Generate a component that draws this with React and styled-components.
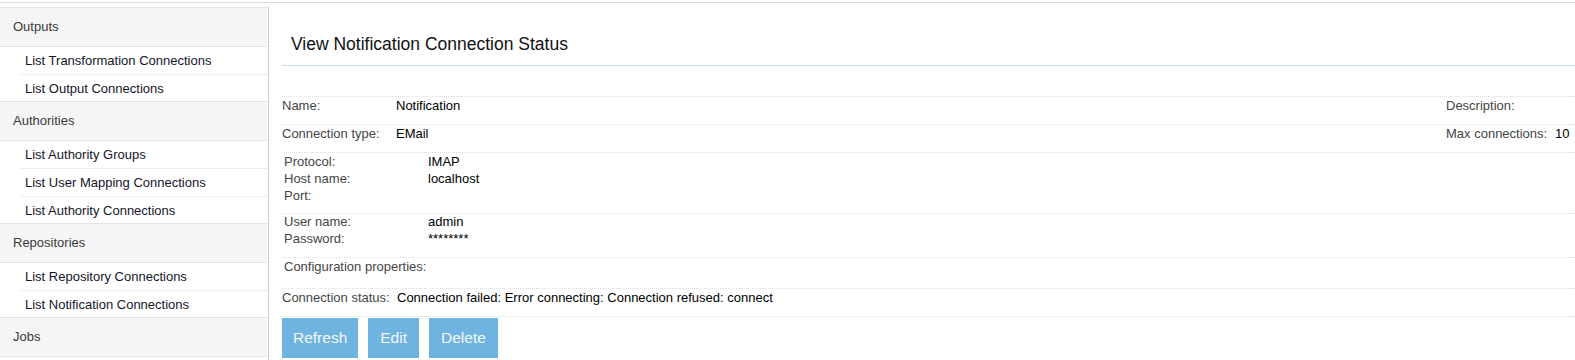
import React from 'react';
import styled, { createGlobalStyle } from 'styled-components';

const GlobalStyle = createGlobalStyle`
    html, body {
        overflow: hidden;
    }
    body {
        margin: 0;
        background: #ffffff;
        font-family: "Liberation Sans", Arial, sans-serif;
        color: #222222;
    }
`;

const TopRule = styled.div`
    margin-top: 2px;
    border-top: 1px solid #d9d9d9;
`;

const Layout = styled.div`
    display: flex;
    align-items: stretch;
    height: 357px;
`;

const SideColumn = styled.aside`
    flex: 0 0 auto;
    margin-top: 3px;
    padding-top: 1px;
    padding-right: 1px;
    border-right: 1px solid #c9c9c9;
`;

const SidePanel = styled.nav`
    width: 267px;
`;

const SectionHeader = styled.div`
    height: 38px;
    line-height: 38px;
    padding-left: 13px;
    background: #f5f5f5;
    border-top: 1px solid #e3e3e3;
    border-bottom: 1px solid #e3e3e3;
    font-size: 13px;
    color: #3a3a3a;
`;

const SectionItem = styled.div`
    height: 27px;
    line-height: 27px;
    margin-left: 20px;
    padding-left: 5px;
    border-bottom: 1px dotted #dcdcdc;
    font-size: 13px;
    color: #15152a;

    &:last-child {
        height: 26px;
        border-bottom: none;
    }
`;

const Main = styled.main`
    flex: 1;
    min-width: 0;
    padding: 0 0 0 13px;
`;

const TitleBar = styled.div`
    padding: 31px 0 11px 9px;
    border-bottom: 1px solid #bfe0f6;
    margin-bottom: 30px;
`;

const Title = styled.h1`
    margin: 0;
    font-size: 17.5px;
    line-height: 20px;
    font-weight: normal;
    color: #111111;
`;

const Row = styled.div`
    display: grid;
    grid-template-columns: ${(props) => props.columns || '1fr'};
    padding: 0 0 ${(props) => props.bottom || 10}px;
    border-top: 1px dotted #dedede;
    font-size: 13px;
    line-height: 17px;
`;

const Label = styled.div`
    color: #444444;
    white-space: nowrap;
    padding-left: ${(props) => props.indent || 0}px;
`;

const Value = styled.div`
    color: #000000;
    white-space: nowrap;
`;

const SubGrid = styled.div`
    display: grid;
    grid-template-columns: 146px 1fr;
    line-height: ${(props) => props.lh || 17}px;
`;

const ButtonBar = styled.div`
    display: flex;
    gap: 10px;
    padding-top: 1px;
    border-top: 1px dotted #dedede;
`;

const ActionButton = styled.button`
    height: 40px;
    padding: 0 ${(props) => props.px || 12}px;
    border: none;
    background: #6fb3e0;
    color: #f4faff;
    font-family: "Liberation Sans", Arial, sans-serif;
    font-size: 15.5px;
    cursor: pointer;
`;

const nav = [
    { title: 'Outputs', items: ['List Transformation Connections', 'List Output Connections'] },
    { title: 'Authorities', items: ['List Authority Groups', 'List User Mapping Connections', 'List Authority Connections'] },
    { title: 'Repositories', items: ['List Repository Connections', 'List Notification Connections'] },
    { title: 'Jobs', items: [] },
];

const App = () => {
    return (
        <>
            <GlobalStyle />
            <TopRule />
            <Layout>
                <SideColumn>
                    <SidePanel>
                        {nav.map((section) => (
                            <div key={section.title}>
                                <SectionHeader>{section.title}</SectionHeader>
                                <div>
                                    {section.items.map((item) => (
                                        <SectionItem key={item}>{item}</SectionItem>
                                    ))}
                                </div>
                            </div>
                        ))}
                    </SidePanel>
                </SideColumn>

                <Main>
                    <TitleBar>
                        <Title>View Notification Connection Status</Title>
                    </TitleBar>

                    <Row columns="114px 1fr 109px 20px">
                        <Label>Name:</Label>
                        <Value>Notification</Value>
                        <Label>Description:</Label>
                        <Value></Value>
                    </Row>
                    <Row columns="114px 1fr 109px 20px">
                        <Label>Connection type:</Label>
                        <Value>EMail</Value>
                        <Label>Max connections:</Label>
                        <Value>10</Value>
                    </Row>
                    <Row bottom={9}>
                        <SubGrid>
                            <Label indent={2}>Protocol:</Label>
                            <Value>IMAP</Value>
                            <Label indent={2}>Host name:</Label>
                            <Value>localhost</Value>
                            <Label indent={2}>Port:</Label>
                            <Value></Value>
                        </SubGrid>
                    </Row>
                    <Row bottom={10}>
                        <SubGrid lh={16.5}>
                            <Label indent={2}>User name:</Label>
                            <Value>admin</Value>
                            <Label indent={2}>Password:</Label>
                            <Value>********</Value>
                        </SubGrid>
                    </Row>
                    <Row bottom={13}>
                        <Label indent={2}>Configuration properties:</Label>
                    </Row>
                    <Row columns="115px 1fr">
                        <Label>Connection status:</Label>
                        <Value>Connection failed: Error connecting: Connection refused: connect</Value>
                    </Row>
                    <ButtonBar>
                        <ActionButton px={11}>Refresh</ActionButton>
                        <ActionButton px={12}>Edit</ActionButton>
                        <ActionButton px={12}>Delete</ActionButton>
                    </ButtonBar>
                </Main>
            </Layout>
        </>
    );
};

export default App;
